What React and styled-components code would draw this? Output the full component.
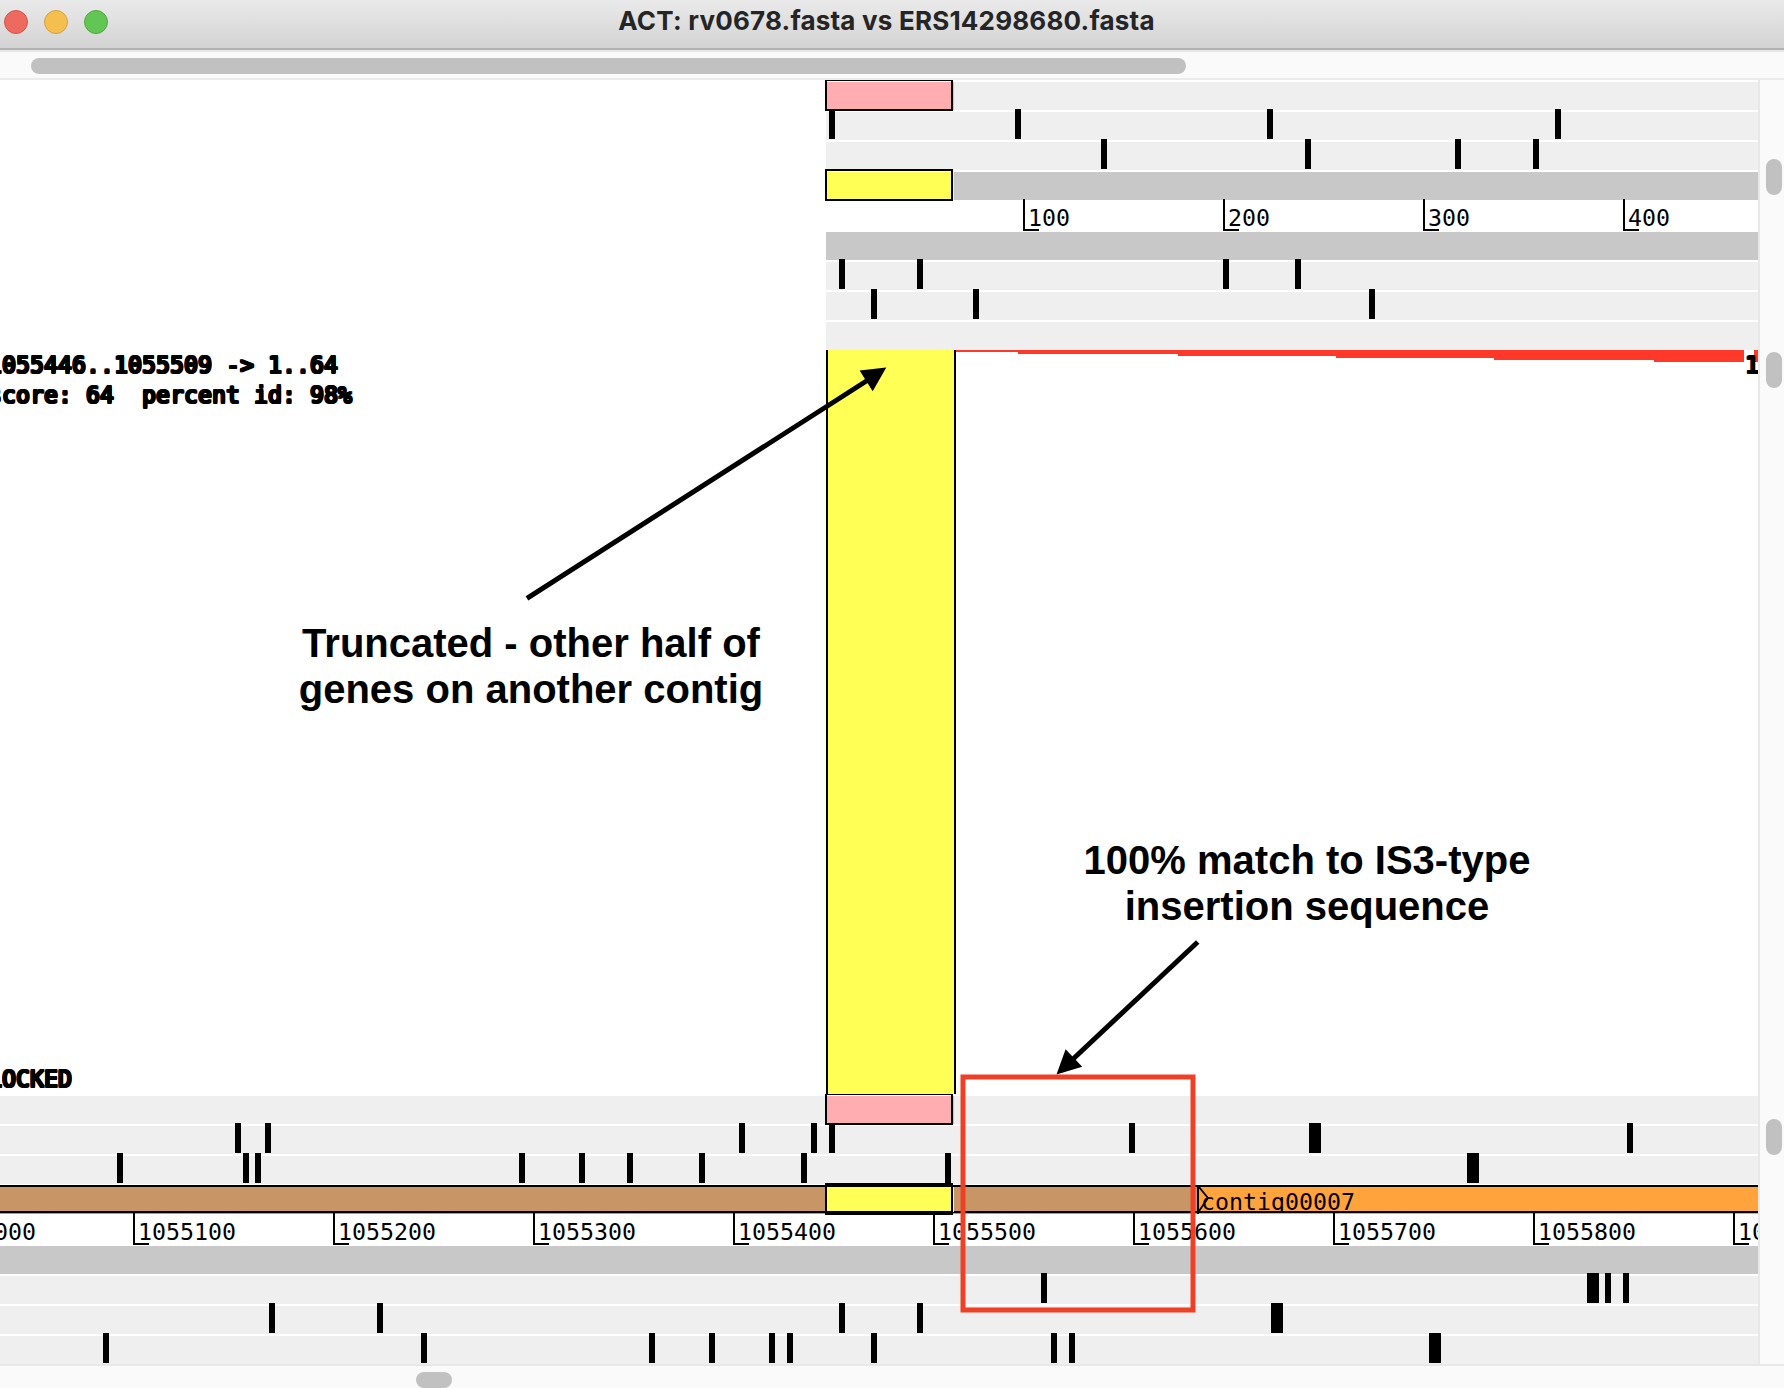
import React from "react";
import styled, { createGlobalStyle, css } from "styled-components";

const Global = createGlobalStyle`
  * { box-sizing: border-box; }
  html, body { margin: 0; padding: 0; background: #fff; overflow: hidden; }
`;

const mono = css`
  font-family: "DejaVu Sans Mono", monospace;
  font-size: 23.25px;
  line-height: 28px;
  white-space: pre;
`;

const Window = styled.div`
  width: 1784px;
  height: 1388px;
  display: flex;
  flex-direction: column;
  overflow: hidden;
  background: #fff;
`;

const TitleBar = styled.header`
  height: 50px;
  flex: none;
  display: flex;
  align-items: flex-start;
  background: linear-gradient(#eaeaea, #d3d3d3);
  border-bottom: 2px solid #b2b2b2;
`;

const Lights = styled.div`
  display: flex;
  gap: 16px;
  padding: 10px 0 0 4px;
`;

const Light = styled.span`
  width: 24px;
  height: 24px;
  border-radius: 50%;
  background: ${(p) => p.$fill};
  border: 1px solid ${(p) => p.$edge};
`;

const Title = styled.h1`
  margin: 0;
  padding-right: 119px;
  flex: 1;
  text-align: center;
  font: 700 26px/42px Inter, sans-serif;
  font-feature-settings: "calt" 0;
  letter-spacing: 0.2px;
  color: #252525;
  white-space: nowrap;
`;

const HorizontalScroll = styled.div`
  flex: none;
  height: ${(p) => p.$height}px;
  padding: 6px 0 0 ${(p) => p.$start}px;
  background: #fafafa;
  border-top: 2px solid #e8e8e8;
  border-bottom: ${(p) => (p.$closed ? "2px solid #ebebeb" : "none")};
`;

const Thumb = styled.div`
  width: ${(p) => p.$w}px;
  height: ${(p) => p.$h}px;
  border-radius: 8px;
  background: #c1c1c1;
`;

const Body = styled.div`
  height: 1284px;
  flex: none;
  display: flex;
`;

const Canvas = styled.main`
  position: relative;
  width: 1758px;
  display: flex;
  flex-direction: column;
  overflow: hidden;
`;

const VerticalScroll = styled.aside`
  width: 26px;
  padding: 79px 0 0 6px;
  display: flex;
  flex-direction: column;
  background: #fafafa;
  border-left: 2px solid #e8e8e8;
`;

const ThumbGap = styled.div`
  height: ${(p) => p.$h}px;
`;

const Genome = styled.section`
  margin-left: ${(p) => p.$start}px;
  flex: none;
`;

const Lane = styled.div`
  position: relative;
  height: ${(p) => (p.$flush ? 28 : 30)}px;
  border-top: ${(p) => (p.$flush ? 0 : 2)}px solid #fff;
  background: ${(p) => (p.$strand ? "#c8c8c8" : "#efefef")};
`;

const StopCodon = styled.i`
  position: absolute;
  z-index: 1;
  top: -3px;
  width: ${(p) => (p.$wide ? 12 : 6)}px;
  height: 30px;
  background: #000;
`;

const Ruler = styled.div`
  position: relative;
  height: 32px;
  background: #fff;
`;

const Mark = styled.div`
  ${mono}
  position: absolute;
  top: -1px;
  height: 32px;
  padding: 5px 0 0 3px;
  border-left: 2px solid #000;
  color: #000;

  &::after {
    content: "";
    position: absolute;
    left: 0;
    bottom: 0;
    width: 14px;
    height: 2px;
    background: #000;
  }
`;

const Feature = styled.div`
  position: absolute;
  z-index: 2;
  left: ${(p) => p.$x}px;
  top: ${(p) => p.$top}px;
  width: 128px;
  height: ${(p) => p.$h}px;
  border: 2px solid #000;
  border-top-width: ${(p) => p.$edge}px;
  border-bottom-width: ${(p) => p.$foot || 2}px;
  background: ${(p) => p.$fill};
  box-shadow: inset 0 ${(p) => p.$gap || 0}px #fff;

  &::after {
    content: "";
    position: absolute;
    left: 126px;
    top: ${(p) => p.$gap || 0}px;
    width: 1px;
    bottom: -1px;
    background: ${(p) => p.$fill};
  }
`;

const ContigLane = styled.div`
  position: relative;
  height: 30px;
  padding-top: 1px;
  display: flex;
  background: #fff;
`;

const Contig = styled.div`
  position: relative;
  width: ${(p) => p.$w}px;
  height: 29px;
  overflow: hidden;
  background: ${(p) => p.$fill};
  border-top: 2px solid #000;
  border-left: ${(p) => (p.$open ? "2px solid #000" : "none")};

  &::after {
    content: "";
    position: absolute;
    left: 0;
    right: 0;
    bottom: 1px;
    height: 2px;
    background: #000;
  }
`;

const ContigName = styled.span`
  ${mono}
  display: block;
  height: 24px;
  overflow: hidden;
  padding: 1px 0 0 2px;
  color: #000;
`;

const Chevron = styled.svg`
  position: absolute;
  left: 0;
  top: 0;
`;

const Comparison = styled.section`
  position: relative;
  height: 746px;
  flex: none;
  background: #fff;
`;

const MatchArt = styled.svg`
  position: absolute;
  inset: 0;
`;

const Info = styled.div`
  ${mono}
  position: absolute;
  left: ${(p) => p.$x}px;
  top: ${(p) => p.$y}px;
  line-height: 30px;
  color: #000;
  text-shadow: 1px 0 #000, -1px 0 #000, 0 1px #000, 0 -1px #000,
    1px 1px #000, -1px 1px #000, 1px -1px #000, -1px -1px #000;
`;

const Note = styled.p`
  position: absolute;
  margin: 0;
  left: ${(p) => p.$x}px;
  top: ${(p) => p.$y}px;
  width: 520px;
  text-align: center;
  font: 700 40px/46px "Liberation Sans", Arial, sans-serif;
  color: #000;
`;

const Annotations = styled.svg`
  position: absolute;
  inset: 0;
  z-index: 3;
`;

const PINK = "#ffadb0";
const YELLOW = "#ffff55";

const topForward = [
  [],
  [829, 1015, 1267, 1555],
  [1101, 1305, 1455, 1533],
];
const topReverse = [[839, 917, 1223, 1295], [871, 973, 1369], []];

const bottomForward = [
  [],
  [235, 265, 739, 811, 829, 1129, [1309], 1627],
  [117, 243, 255, 519, 579, 627, 699, 801, 945, [1467]],
];
const bottomReverse = [
  [1041, [1587], 1605, 1623],
  [269, 377, 839, 917, [1271]],
  [103, 421, 649, 709, 769, 787, 871, 1051, 1069, [1429]],
];

const redSteps = [
  [956, 1018, 2],
  [1018, 1178, 4],
  [1178, 1336, 6],
  [1336, 1494, 8],
  [1494, 1654, 10],
  [1654, 1744, 12],
  [1754, 1758, 12],
];

function Stops({ codons, start }) {
  return codons.map((c) => {
    const wide = Array.isArray(c);
    const x = wide ? c[0] : c;
    return <StopCodon key={x} $wide={wide} style={{ left: x - start }} />;
  });
}

function Scale({ first, at, step, count }) {
  return (
    <Ruler>
      {Array.from({ length: count }, (_, i) => (
        <Mark key={i} style={{ left: at + i * 200 }}>
          {first + i * step}
        </Mark>
      ))}
    </Ruler>
  );
}

export default function App() {
  return (
    <>
      <Global />
      <Window>
        <TitleBar>
          <Lights>
            <Light $fill="#ee6a5f" $edge="#d5544a" />
            <Light $fill="#f5bf4f" $edge="#d8a040" />
            <Light $fill="#62c655" $edge="#52a843" />
          </Lights>
          <Title>ACT: rv0678.fasta vs ERS14298680.fasta</Title>
        </TitleBar>
        <HorizontalScroll $height={30} $start={31} $closed>
          <Thumb $w={1155} $h={16} />
        </HorizontalScroll>
        <Body>
          <Canvas>
            <Genome $start={826}>
              {topForward.map((codons, i) => (
                <Lane key={i}>
                  {i === 0 && <Feature $x={-1} $top={-2} $h={31} $edge={1} $gap={1} $fill={PINK} />}
                  <Stops codons={codons} start={826} />
                </Lane>
              ))}
              <Lane $strand>
                <Feature $x={-1} $top={-3} $h={32} $edge={2} $gap={1} $fill={YELLOW} />
              </Lane>
              <Scale first={100} at={197} step={100} count={4} />
              <Lane $strand $flush />
              {topReverse.map((codons, i) => (
                <Lane key={i}>
                  <Stops codons={codons} start={826} />
                </Lane>
              ))}
            </Genome>

            <Comparison>
              <MatchArt width="1758" height="746" shapeRendering="crispEdges">
                {redSteps.map(([a, b, h]) => (
                  <rect key={a} x={a} y="0" width={b - a} height={h} fill="#ff3829" />
                ))}
                <rect x="826" y="0" width="130" height="744" fill="#000" />
                <rect x="828" y="0" width="126" height="744" fill={YELLOW} />
              </MatchArt>
              <Info $x={-12} $y={0}>
                {"1055446..1055509 -> 1..64\nscore: 64  percent id: 98%"}
              </Info>
              <Info $x={1745} $y={0}>1</Info>
              <Info $x={-12} $y={714}>LOCKED</Info>
              <Note $x={271} $y={270}>
                Truncated - other half of
                <br />
                genes on another contig
              </Note>
              <Note $x={1047} $y={487}>
                100% match to IS3-type
                <br />
                insertion sequence
              </Note>
            </Comparison>

            <Genome $start={0}>
              {bottomForward.map((codons, i) => (
                <Lane key={i} $flush={i === 0}>
                  {i === 0 && <Feature $x={825} $top={-2} $h={31} $edge={1} $gap={1} $fill={PINK} />}
                  <Stops codons={codons} start={0} />
                </Lane>
              ))}
              <ContigLane>
                <Contig $w={1197} $fill="#c89664" />
                <Contig $w={561} $fill="#ffa43c" $open>
                  <Chevron width="12" height="25" fill="none" stroke="#000" strokeWidth="1.8">
                    <path d="M0 0L9 11L0 24" />
                  </Chevron>
                  <ContigName>contig00007</ContigName>
                </Contig>
                <Feature $x={825} $top={-1} $h={32} $edge={4} $foot={4} $fill={YELLOW} />
              </ContigLane>
              <Scale first={1055000} at={-67} step={100} count={10} />
              <Lane $strand $flush />
              {bottomReverse.map((codons, i) => (
                <Lane key={i}>
                  <Stops codons={codons} start={0} />
                </Lane>
              ))}
            </Genome>

            <Annotations width="1758" height="1284" viewBox="0 80 1758 1284">
              <g stroke="#000" strokeWidth="5">
                <path d="M527 598.3L868 380" />
                <path d="M1197.7 942L1072 1060" />
              </g>
              <path d="M886.3 367.6L859.6 370.6L872.7 391.2Z" />
              <path d="M1056.5 1074.5L1065.6 1049.2L1082.2 1066.8Z" />
              <rect x="963" y="1077" width="230" height="233" fill="none" stroke="#ee4026" strokeWidth="5" />
            </Annotations>
          </Canvas>
          <VerticalScroll>
            <Thumb $w={16} $h={36} />
            <ThumbGap $h={157} />
            <Thumb $w={16} $h={36} />
            <ThumbGap $h={731} />
            <Thumb $w={16} $h={36} />
          </VerticalScroll>
        </Body>
        <HorizontalScroll $height={24} $start={416}>
          <Thumb $w={36} $h={16} />
        </HorizontalScroll>
      </Window>
    </>
  );
}
